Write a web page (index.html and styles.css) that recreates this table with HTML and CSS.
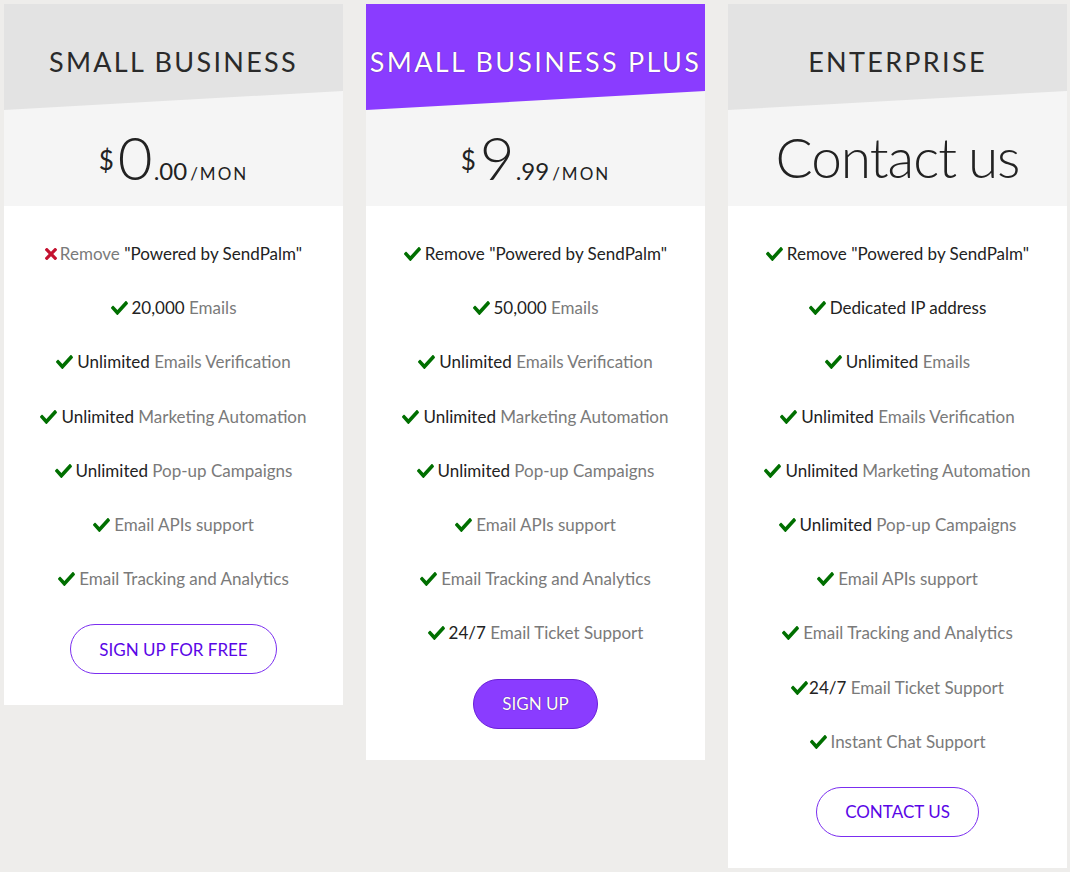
FILE: index.html
```html
<!DOCTYPE html>
<html>
<head>
<meta charset="utf-8">
<link rel="stylesheet" href="styles.css">
</head>
<body>
<div class="plans">
  <div class="card">
    <div class="top">
      <div class="head"><h2>SMALL BUSINESS</h2></div>
      <div class="price"><span class="cur">$</span><span class="big">0</span><span class="cents">.00</span><span class="per">/MON</span></div>
    </div>
    <ul class="features">
      <li><svg class="ico no" viewBox="0 80 352 352"><path d="M242.72 256l100.07-100.07c12.28-12.28 12.28-32.19 0-44.48l-22.24-22.24c-12.28-12.28-32.19-12.28-44.48 0L176 189.28 75.930 89.21c-12.28-12.28-32.19-12.280-44.48 0L9.21 111.45c-12.28 12.28-12.28 32.19 0 44.48L109.28 256 9.21 356.07c-12.28 12.28-12.28 32.19 0 44.48l22.24 22.24c12.28 12.28 32.2 12.28 44.48 0L176 322.72l100.07 100.07c12.28 12.28 32.2 12.28 44.48 0l22.24-22.24c12.28-12.28 12.28-32.19 0-44.48L242.72 256z"/></svg><span class="g">Remove</span> <b>"Powered by SendPalm"</b></li>
      <li><svg class="ico ok" viewBox="0 64 512 384" preserveAspectRatio="none"><path d="M173.9 439.4l-166.4-166.4c-10-10-10-26.2 0-36.2l36.2-36.2c10-10 26.2-10 36.2 0L192 312.7 432.1 72.6c10-10 26.2-10 36.2 0l36.2 36.2c10 10 10 26.2 0 36.2l-294.4 294.4c-10 10-26.2 10-36.2 0z"/></svg><b>20,000</b> <span class="g">Emails</span></li>
      <li><svg class="ico ok" viewBox="0 64 512 384" preserveAspectRatio="none"><path d="M173.9 439.4l-166.4-166.4c-10-10-10-26.2 0-36.2l36.2-36.2c10-10 26.2-10 36.2 0L192 312.7 432.1 72.6c10-10 26.2-10 36.2 0l36.2 36.2c10 10 10 26.2 0 36.2l-294.4 294.4c-10 10-26.2 10-36.2 0z"/></svg><b>Unlimited</b> <span class="g">Emails Verification</span></li>
      <li><svg class="ico ok" viewBox="0 64 512 384" preserveAspectRatio="none"><path d="M173.9 439.4l-166.4-166.4c-10-10-10-26.2 0-36.2l36.2-36.2c10-10 26.2-10 36.2 0L192 312.7 432.1 72.6c10-10 26.2-10 36.2 0l36.2 36.2c10 10 10 26.2 0 36.2l-294.4 294.4c-10 10-26.2 10-36.2 0z"/></svg><b>Unlimited</b> <span class="g">Marketing Automation</span></li>
      <li><svg class="ico ok" viewBox="0 64 512 384" preserveAspectRatio="none"><path d="M173.9 439.4l-166.4-166.4c-10-10-10-26.2 0-36.2l36.2-36.2c10-10 26.2-10 36.2 0L192 312.7 432.1 72.6c10-10 26.2-10 36.2 0l36.2 36.2c10 10 10 26.2 0 36.2l-294.4 294.4c-10 10-26.2 10-36.2 0z"/></svg><b>Unlimited</b> <span class="g">Pop-up Campaigns</span></li>
      <li><svg class="ico ok" viewBox="0 64 512 384" preserveAspectRatio="none"><path d="M173.9 439.4l-166.4-166.4c-10-10-10-26.2 0-36.2l36.2-36.2c10-10 26.2-10 36.2 0L192 312.7 432.1 72.6c10-10 26.2-10 36.2 0l36.2 36.2c10 10 10 26.2 0 36.2l-294.4 294.4c-10 10-26.2 10-36.2 0z"/></svg><span class="g">Email APIs support</span></li>
      <li><svg class="ico ok" viewBox="0 64 512 384" preserveAspectRatio="none"><path d="M173.9 439.4l-166.4-166.4c-10-10-10-26.2 0-36.2l36.2-36.2c10-10 26.2-10 36.2 0L192 312.7 432.1 72.6c10-10 26.2-10 36.2 0l36.2 36.2c10 10 10 26.2 0 36.2l-294.4 294.4c-10 10-26.2 10-36.2 0z"/></svg><span class="g">Email Tracking and Analytics</span></li>
    </ul>
    <div class="cta"><a class="btn">SIGN UP FOR FREE</a></div>
  </div>

  <div class="card">
    <div class="top">
      <div class="head featured"><h2>SMALL BUSINESS PLUS</h2></div>
      <div class="price"><span class="cur">$</span><span class="big">9</span><span class="cents">.99</span><span class="per">/MON</span></div>
    </div>
    <ul class="features">
      <li><svg class="ico ok" viewBox="0 64 512 384" preserveAspectRatio="none"><path d="M173.9 439.4l-166.4-166.4c-10-10-10-26.2 0-36.2l36.2-36.2c10-10 26.2-10 36.2 0L192 312.7 432.1 72.6c10-10 26.2-10 36.2 0l36.2 36.2c10 10 10 26.2 0 36.2l-294.4 294.4c-10 10-26.2 10-36.2 0z"/></svg><b>Remove "Powered by SendPalm"</b></li>
      <li><svg class="ico ok" viewBox="0 64 512 384" preserveAspectRatio="none"><path d="M173.9 439.4l-166.4-166.4c-10-10-10-26.2 0-36.2l36.2-36.2c10-10 26.2-10 36.2 0L192 312.7 432.1 72.6c10-10 26.2-10 36.2 0l36.2 36.2c10 10 10 26.2 0 36.2l-294.4 294.4c-10 10-26.2 10-36.2 0z"/></svg><b>50,000</b> <span class="g">Emails</span></li>
      <li><svg class="ico ok" viewBox="0 64 512 384" preserveAspectRatio="none"><path d="M173.9 439.4l-166.4-166.4c-10-10-10-26.2 0-36.2l36.2-36.2c10-10 26.2-10 36.2 0L192 312.7 432.1 72.6c10-10 26.2-10 36.2 0l36.2 36.2c10 10 10 26.2 0 36.2l-294.4 294.4c-10 10-26.2 10-36.2 0z"/></svg><b>Unlimited</b> <span class="g">Emails Verification</span></li>
      <li><svg class="ico ok" viewBox="0 64 512 384" preserveAspectRatio="none"><path d="M173.9 439.4l-166.4-166.4c-10-10-10-26.2 0-36.2l36.2-36.2c10-10 26.2-10 36.2 0L192 312.7 432.1 72.6c10-10 26.2-10 36.2 0l36.2 36.2c10 10 10 26.2 0 36.2l-294.4 294.4c-10 10-26.2 10-36.2 0z"/></svg><b>Unlimited</b> <span class="g">Marketing Automation</span></li>
      <li><svg class="ico ok" viewBox="0 64 512 384" preserveAspectRatio="none"><path d="M173.9 439.4l-166.4-166.4c-10-10-10-26.2 0-36.2l36.2-36.2c10-10 26.2-10 36.2 0L192 312.7 432.1 72.6c10-10 26.2-10 36.2 0l36.2 36.2c10 10 10 26.2 0 36.2l-294.4 294.4c-10 10-26.2 10-36.2 0z"/></svg><b>Unlimited</b> <span class="g">Pop-up Campaigns</span></li>
      <li><svg class="ico ok" viewBox="0 64 512 384" preserveAspectRatio="none"><path d="M173.9 439.4l-166.4-166.4c-10-10-10-26.2 0-36.2l36.2-36.2c10-10 26.2-10 36.2 0L192 312.7 432.1 72.6c10-10 26.2-10 36.2 0l36.2 36.2c10 10 10 26.2 0 36.2l-294.4 294.4c-10 10-26.2 10-36.2 0z"/></svg><span class="g">Email APIs support</span></li>
      <li><svg class="ico ok" viewBox="0 64 512 384" preserveAspectRatio="none"><path d="M173.9 439.4l-166.4-166.4c-10-10-10-26.2 0-36.2l36.2-36.2c10-10 26.2-10 36.2 0L192 312.7 432.1 72.6c10-10 26.2-10 36.2 0l36.2 36.2c10 10 10 26.2 0 36.2l-294.4 294.4c-10 10-26.2 10-36.2 0z"/></svg><span class="g">Email Tracking and Analytics</span></li>
      <li><svg class="ico ok" viewBox="0 64 512 384" preserveAspectRatio="none"><path d="M173.9 439.4l-166.4-166.4c-10-10-10-26.2 0-36.2l36.2-36.2c10-10 26.2-10 36.2 0L192 312.7 432.1 72.6c10-10 26.2-10 36.2 0l36.2 36.2c10 10 10 26.2 0 36.2l-294.4 294.4c-10 10-26.2 10-36.2 0z"/></svg><b>24/7</b> <span class="g">Email Ticket Support</span></li>
    </ul>
    <div class="cta"><a class="btn solid">SIGN UP</a></div>
  </div>

  <div class="card">
    <div class="top">
      <div class="head"><h2>ENTERPRISE</h2></div>
      <div class="price"><span class="contact">Contact us</span></div>
    </div>
    <ul class="features">
      <li><svg class="ico ok" viewBox="0 64 512 384" preserveAspectRatio="none"><path d="M173.9 439.4l-166.4-166.4c-10-10-10-26.2 0-36.2l36.2-36.2c10-10 26.2-10 36.2 0L192 312.7 432.1 72.6c10-10 26.2-10 36.2 0l36.2 36.2c10 10 10 26.2 0 36.2l-294.4 294.4c-10 10-26.2 10-36.2 0z"/></svg><b>Remove "Powered by SendPalm"</b></li>
      <li><svg class="ico ok" viewBox="0 64 512 384" preserveAspectRatio="none"><path d="M173.9 439.4l-166.4-166.4c-10-10-10-26.2 0-36.2l36.2-36.2c10-10 26.2-10 36.2 0L192 312.7 432.1 72.6c10-10 26.2-10 36.2 0l36.2 36.2c10 10 10 26.2 0 36.2l-294.4 294.4c-10 10-26.2 10-36.2 0z"/></svg><b>Dedicated IP address</b></li>
      <li><svg class="ico ok" viewBox="0 64 512 384" preserveAspectRatio="none"><path d="M173.9 439.4l-166.4-166.4c-10-10-10-26.2 0-36.2l36.2-36.2c10-10 26.2-10 36.2 0L192 312.7 432.1 72.6c10-10 26.2-10 36.2 0l36.2 36.2c10 10 10 26.2 0 36.2l-294.4 294.4c-10 10-26.2 10-36.2 0z"/></svg><b>Unlimited</b> <span class="g">Emails</span></li>
      <li><svg class="ico ok" viewBox="0 64 512 384" preserveAspectRatio="none"><path d="M173.9 439.4l-166.4-166.4c-10-10-10-26.2 0-36.2l36.2-36.2c10-10 26.2-10 36.2 0L192 312.7 432.1 72.6c10-10 26.2-10 36.2 0l36.2 36.2c10 10 10 26.2 0 36.2l-294.4 294.4c-10 10-26.2 10-36.2 0z"/></svg><b>Unlimited</b> <span class="g">Emails Verification</span></li>
      <li><svg class="ico ok" viewBox="0 64 512 384" preserveAspectRatio="none"><path d="M173.9 439.4l-166.4-166.4c-10-10-10-26.2 0-36.2l36.2-36.2c10-10 26.2-10 36.2 0L192 312.7 432.1 72.6c10-10 26.2-10 36.2 0l36.2 36.2c10 10 10 26.2 0 36.2l-294.4 294.4c-10 10-26.2 10-36.2 0z"/></svg><b>Unlimited</b> <span class="g">Marketing Automation</span></li>
      <li><svg class="ico ok" viewBox="0 64 512 384" preserveAspectRatio="none"><path d="M173.9 439.4l-166.4-166.4c-10-10-10-26.2 0-36.2l36.2-36.2c10-10 26.2-10 36.2 0L192 312.7 432.1 72.6c10-10 26.2-10 36.2 0l36.2 36.2c10 10 10 26.2 0 36.2l-294.4 294.4c-10 10-26.2 10-36.2 0z"/></svg><b>Unlimited</b> <span class="g">Pop-up Campaigns</span></li>
      <li><svg class="ico ok" viewBox="0 64 512 384" preserveAspectRatio="none"><path d="M173.9 439.4l-166.4-166.4c-10-10-10-26.2 0-36.2l36.2-36.2c10-10 26.2-10 36.2 0L192 312.7 432.1 72.6c10-10 26.2-10 36.2 0l36.2 36.2c10 10 10 26.2 0 36.2l-294.4 294.4c-10 10-26.2 10-36.2 0z"/></svg><span class="g">Email APIs support</span></li>
      <li><svg class="ico ok" viewBox="0 64 512 384" preserveAspectRatio="none"><path d="M173.9 439.4l-166.4-166.4c-10-10-10-26.2 0-36.2l36.2-36.2c10-10 26.2-10 36.2 0L192 312.7 432.1 72.6c10-10 26.2-10 36.2 0l36.2 36.2c10 10 10 26.2 0 36.2l-294.4 294.4c-10 10-26.2 10-36.2 0z"/></svg><span class="g">Email Tracking and Analytics</span></li>
      <li><svg class="ico ok tight" viewBox="0 64 512 384" preserveAspectRatio="none"><path d="M173.9 439.4l-166.4-166.4c-10-10-10-26.2 0-36.2l36.2-36.2c10-10 26.2-10 36.2 0L192 312.7 432.1 72.6c10-10 26.2-10 36.2 0l36.2 36.2c10 10 10 26.2 0 36.2l-294.4 294.4c-10 10-26.2 10-36.2 0z"/></svg><b>24/7</b> <span class="g">Email Ticket Support</span></li>
      <li><svg class="ico ok" viewBox="0 64 512 384" preserveAspectRatio="none"><path d="M173.9 439.4l-166.4-166.4c-10-10-10-26.2 0-36.2l36.2-36.2c10-10 26.2-10 36.2 0L192 312.7 432.1 72.6c10-10 26.2-10 36.2 0l36.2 36.2c10 10 10 26.2 0 36.2l-294.4 294.4c-10 10-26.2 10-36.2 0z"/></svg><span class="g">Instant Chat Support</span></li>
    </ul>
    <div class="cta"><a class="btn">CONTACT US</a></div>
  </div>
</div>
</body>
</html>
```

FILE: styles.css
```css
html, body {
  margin: 0;
  padding: 0;
  background: #eeedeb;
}
body {
  padding: 4px;
  font-family: Lato, "Liberation Sans", sans-serif;
}
.plans {
  display: flex;
  align-items: flex-start;
  gap: 23px;
}
.card {
  width: 339px;
  flex: 0 0 339px;
  background: #fff;
  display: flex;
  flex-direction: column;
}
.top {
  background: #f5f5f5;
  height: 202px;
  display: flex;
  flex-direction: column;
}
.head {
  height: 106px;
  background: #e3e3e3;
  clip-path: polygon(0 0, 100% 0, 100% 82%, 0 100%);
  display: flex;
  align-items: center;
  justify-content: center;
  padding-top: 9px;
  box-sizing: border-box;
}
.head h2 {
  margin: 0;
  font-weight: 400;
  font-size: 27px;
  letter-spacing: 2.3px;
  color: #2a2a2a;
  white-space: nowrap;
}
.head.featured {
  background: #8a3cff;
}
.head.featured h2 {
  color: #fff;
  text-shadow: 0 0 1px #3a1070;
}
.price {
  flex: 1;
  display: flex;
  align-items: baseline;
  justify-content: center;
  padding-top: 17px;
  color: #222;
  font-weight: 300;
}
.price .cur {
  font-size: 26px;
  font-weight: 400;
  position: relative;
  top: -10px;
  margin-right: 4px;
}
.price .big {
  font-size: 60px;
  line-height: 60px;
}
.price .cents {
  font-size: 24px;
  font-weight: 400;
  margin-left: 1px;
}
.price .per {
  font-size: 17px;
  font-weight: 400;
  letter-spacing: 2px;
  margin-left: 3px;
}
.price .contact {
  font-size: 55px;
  line-height: 60px;
  letter-spacing: -1px;
  word-spacing: -2px;
}
.features {
  list-style: none;
  margin: 0;
  padding: 21px 0 0;
}
.features li {
  height: 54.2px;
  line-height: 54px;
  text-align: center;
  font-size: 17px;
  white-space: nowrap;
}
.features b {
  font-weight: 400;
  color: #222;
}
.features .g {
  color: #7a7a7a;
}
.ico {
  display: inline-block;
  vertical-align: -1px;
  width: 17px;
  height: 14px;
  margin-right: 4px;
}
.ico.ok { fill: #006f00; }
.ico.no { fill: #c41230; width: 12px; height: 12px; margin-right: 3px; vertical-align: 0; }
.ico.tight { margin-right: 1px; }
.cta {
  display: flex;
  justify-content: center;
  padding: 18px 0 31px;
}
.btn {
  display: flex;
  align-items: center;
  justify-content: center;
  height: 50px;
  box-sizing: border-box;
  padding: 0 28px;
  border: 1.5px solid #7b2ef0;
  border-radius: 25px;
  color: #5a06e6;
  font-size: 17px;
  cursor: pointer;
}
.btn.solid {
  background: #8a3cff;
  border-color: #6a20d8;
  color: #fff;
  text-shadow: 0 0 1px #3a1070;
}
```
